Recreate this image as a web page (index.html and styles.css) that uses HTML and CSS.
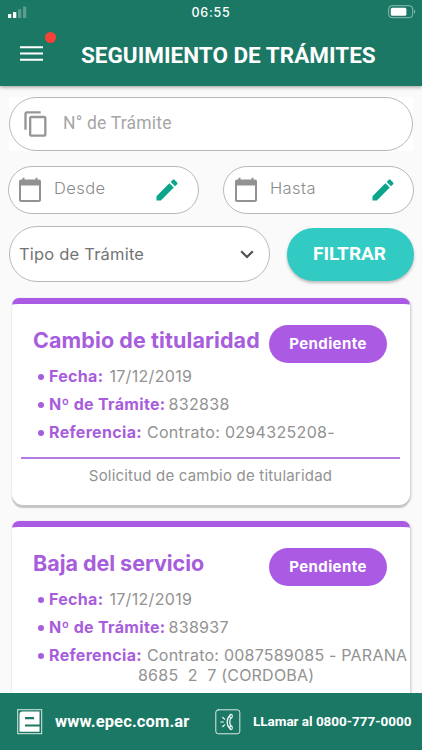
FILE: index.html
```html
<!DOCTYPE html>
<html lang="es">
<head>
<meta charset="utf-8">
<meta name="viewport" content="width=device-width, initial-scale=1">
<title>Seguimiento de trámites</title>
<link rel="stylesheet" href="styles.css">
</head>
<body>
<div class="app">
  <header class="header">
    <div class="status">
      <svg class="signal" width="20" height="12" viewBox="0 0 20 12"><g fill="#fff"><rect x="0" y="8" width="3.3" height="4" rx=".6"/><rect x="5" y="6" width="3.3" height="6" rx=".6"/><rect x="10" y="3.3" width="3.3" height="8.7" rx=".6" opacity=".28"/><rect x="15" y="0.5" width="3.3" height="11.5" rx=".6" opacity=".28"/></g></svg>
      <span class="clock">06:55</span>
      <svg class="battery" width="28" height="14" viewBox="0 0 28 14"><rect x=".7" y=".7" width="24" height="12" rx="3.3" fill="none" stroke="#fff" stroke-opacity=".5"/><rect x="2.8" y="2.8" width="15.6" height="8" rx="1.6" fill="#fff"/><path d="M26 4.6c1.6.7 1.6 3.5 0 4.2z" fill="#fff" opacity=".5"/></svg>
    </div>
    <div class="bar">
      <div class="menu">
        <svg width="23" height="15" viewBox="0 0 23 15"><path d="M0 1.3h23M0 7.5h23M0 13.7h23" stroke="#fff" stroke-width="2.1"/></svg>
        <span class="dot"></span>
      </div>
      <h1 class="title">SEGUIMIENTO DE TRÁMITES</h1>
    </div>
  </header>

  <main class="content">
    <form class="filters">
      <div class="number-wrap">
        <div class="field number">
          <svg class="copy" width="28" height="28" viewBox="0 0 24 24"><path fill="#969696" d="M16 1H4c-1.1 0-2 .9-2 2v14h2V3h12V1zm3 4H8c-1.1 0-2 .9-2 2v14c0 1.1.9 2 2 2h11c1.1 0 2-.9 2-2V7c0-1.1-.9-2-2-2zm0 16H8V7h11v14z"/></svg>
          <span class="hint">N° de Trámite</span>
        </div>
      </div>
      <div class="dates">
        <div class="field date">
          <svg class="calendar" width="24" height="26" viewBox="0 0 24 26"><path fill="#929292" d="M3 2.5h1.5V.7h2v1.8h11V.7h2v1.8H21c1.2 0 2 .8 2 2V23c0 1.200-.8 2-2 2H3c-1.200 0-2-.8-2-2V4.500c0-1.200.8-2 2-2zM3 8.500V23h18V8.500z"/></svg>
          <span class="hint">Desde</span>
          <svg class="pencil" width="28" height="28" viewBox="0 0 24 24"><path fill="#0ba58b" d="M3 17.250V21h3.750L17.810 9.940l-3.750-3.750L3 17.250zM20.710 7.040c.39-.39.39-1.020 0-1.410l-2.340-2.340c-.39-.39-1.020-.39-1.410 0l-1.830 1.830 3.750 3.750 1.830-1.830z"/></svg>
        </div>
        <div class="field date">
          <svg class="calendar" width="24" height="26" viewBox="0 0 24 26"><path fill="#929292" d="M3 2.5h1.5V.7h2v1.8h11V.7h2v1.8H21c1.2 0 2 .8 2 2V23c0 1.200-.8 2-2 2H3c-1.200 0-2-.8-2-2V4.500c0-1.200.8-2 2-2zM3 8.500V23h18V8.500z"/></svg>
          <span class="hint">Hasta</span>
          <svg class="pencil" width="28" height="28" viewBox="0 0 24 24"><path fill="#0ba58b" d="M3 17.250V21h3.750L17.810 9.940l-3.750-3.750L3 17.250zM20.710 7.040c.39-.39.39-1.020 0-1.410l-2.340-2.340c-.39-.39-1.020-.39-1.410 0l-1.830 1.830 3.750 3.750 1.830-1.830z"/></svg>
        </div>
      </div>
      <div class="actions">
        <div class="field select">
          <span class="select-label">Tipo de Trámite</span>
          <svg width="14" height="9" viewBox="0 0 14 9"><path d="M1.200 1.200L7 7l5.800-5.800" fill="none" stroke="#505050" stroke-width="2.200"/></svg>
        </div>
        <button class="filter" type="button">FILTRAR</button>
      </div>
    </form>

    <article class="card">
      <div class="card-head"><h2 class="card-title wide">Cambio de titularidad</h2><span class="badge">Pendiente</span></div>
      <ul class="facts">
        <li><b>Fecha:</b><span class="v-date">17/12/2019</span></li>
        <li><b>Nº de Trámite:</b><span class="v-num">832838</span></li>
        <li><b>Referencia:</b><span class="v-ref">Contrato: 0294325208-</span></li>
      </ul>
      <p class="note"><span>Solicitud de cambio de titularidad</span></p>
    </article>

    <article class="card">
      <div class="card-head"><h2 class="card-title">Baja del servicio</h2><span class="badge">Pendiente</span></div>
      <ul class="facts">
        <li><b>Fecha:</b><span class="v-date">17/12/2019</span></li>
        <li><b>Nº de Trámite:</b><span class="v-num">838937</span></li>
        <li><b>Referencia:</b><span class="v-ref long">Contrato: 0087589085 - PARANA</span></li>
      </ul>
      <p class="address">8685&nbsp; 2&nbsp; 7 (CORDOBA)</p>
    </article>
  </main>

  <footer class="footer">
    <svg class="logo" width="26" height="26" viewBox="0 0 26 26"><rect x=".7" y=".7" width="24" height="24" fill="none" stroke="#d9e9e5" stroke-width="1"/><path fill="#fff" fill-rule="evenodd" d="M5.500 2.500H22.500V15.500H8V17.500H22.500V22.800H2.500V5.500Q2.500 2.500 5.500 2.500zM8 8V10.300H17V8z"/></svg>
    <span class="web">www.epec.com.ar</span>
    <svg class="phone" width="26" height="26" viewBox="0 0 26 26"><g fill="none" stroke="#fff" stroke-linecap="round" stroke-linejoin="round"><rect x=".8" y=".8" width="24" height="24" rx="2.500" stroke-opacity=".85"/><path stroke-width="1.200" d="M15 6.600C11.200 9.500 11.200 16.500 15 19.400M15.900 9C14.400 11 14.400 15 15.900 17"/><ellipse cx="16" cy="7.200" rx="1.300" ry="1.900" stroke-width="1.100"/><ellipse cx="16" cy="18.800" rx="1.300" ry="1.900" stroke-width="1.100"/><path stroke-width="1.200" d="M5.800 13h2.600M7.800 8.500l1.800 1.600M7.800 17.500l1.800-1.600"/></g></svg>
    <span class="call">LLamar al 0800-777-0000</span>
  </footer>
</div>
</body>
</html>
```
FILE: styles.css
```css
* { box-sizing: border-box; }
body { margin: 0; font-family: Inter, "Liberation Sans", sans-serif; background: #fafafa; }
h1, h2, p, ul { margin: 0; padding: 0; }
svg { display: block; flex: none; }
.app { display: flex; flex-direction: column; width: 422px; height: 750px; overflow: hidden; }
span, b, h1, h2, p, button { white-space: nowrap; }

.header { flex: none; height: 86px; background: #1b7865; color: #fff; box-shadow: 0 1px 4px rgba(0, 0, 0, .4); }
.status { display: grid; grid-template-columns: 1fr auto 1fr; align-items: center; height: 24px; padding: 0 6px 0 8px; }
.clock { font-size: 12.5px; font-weight: 500; letter-spacing: .8px; margin-left: -2px; }
.battery { justify-self: end; margin-top: -1px; }
.bar { display: flex; align-items: center; height: 60px; padding-left: 20px; }
.menu { position: relative; width: 61px; margin-top: -1px; }
.dot { position: absolute; left: 25px; top: -14px; width: 11px; height: 11px; border-radius: 50%; background: #f44336; }
.title { font: 700 22.500px/28px Roboto, sans-serif; margin-top: 1px; }

.content { flex: 1; min-height: 0; overflow: hidden; padding: 11px 9px 0; }
.field { display: flex; align-items: center; border: 1px solid #b9b9b9; background: #fff; }
.number-wrap { background: #fff; }
.number { height: 54px; border-radius: 27px; padding-left: 12px; }
.hint { font-family: Roboto, sans-serif; color: #a6a6a6; font-size: 17.500px; letter-spacing: .2px; }
.number .hint { margin: -2px 0 0 13px; }
.dates { display: flex; justify-content: space-between; margin: 15px -1px 0; }
.date { width: 191px; height: 48px; border-radius: 24px; padding: 0 17px 0 9px; }
.date:last-child { padding: 0 16px 0 10px; }
.date .hint { font: 300 16.500px Inter, sans-serif; color: #8c8c8c; margin: -5px 0 0 12px; letter-spacing: .4px; }
.pencil { margin-left: auto; }
.actions { display: flex; justify-content: space-between; align-items: center; margin-top: 12px; }
.select { width: 261px; height: 56px; border-radius: 28px; padding: 0 15px 0 9px; justify-content: space-between; }
.select-label { font-size: 16.500px; color: #747474; letter-spacing: .2px; }
.filter { width: 127px; height: 53px; border: 0; border-radius: 27px; padding: 0 2px 1px 0; margin-right: -1px; background: #31cbc4; color: #fff; font: 700 19px Roboto, sans-serif; box-shadow: 0 2px 3px rgba(0, 0, 0, .25); }

.card { height: 206.500px; margin: 16px 3px 0; border-top: 6px solid #aa5ae3; border-radius: 7px 7px 11px 11px; background: #fff; box-shadow: 0 3px 1px #c5c7c6, 1px 1px 3px rgba(0, 0, 0, .2); }
.card:last-child { height: 260px; }
.card-head { display: flex; justify-content: space-between; height: 58px; padding: 21px 23px 0 21px; }
.card-title { font-size: 21.500px; line-height: 31px; font-weight: 700; color: #a75ddc; letter-spacing: -.03px; }
.card-title.wide { letter-spacing: .1px; }
.badge { flex: none; width: 118px; height: 38px; border-radius: 19px; background: #aa5ae3; color: #fff; text-align: center; font-size: 15px; line-height: 38px; font-weight: 700; letter-spacing: .4px; }
.facts { list-style: none; padding-left: 26px; font-size: 16px; }
.facts li { display: flex; height: 28px; line-height: 28px; color: #929292; letter-spacing: .32px; }
.facts li::before { content: ""; width: 6px; height: 6px; border-radius: 50%; background: #a75ddc; margin: 12px 5px 0 0; flex: none; }
.facts b { font-weight: 700; color: #a75ddc; letter-spacing: .32px; }
.v-date { margin-left: 6px; }
.v-num { margin-left: 3px; }
.v-ref { margin-left: 5px; }
.v-ref.long { letter-spacing: .22px; }
.note { margin: 11px 10px 0 9px; border-top: 2px solid #b47be0; padding-top: 6px; text-align: center; font-size: 15px; line-height: 22px; color: #929292; letter-spacing: .2px; }
.address { padding-left: 126px; margin-top: -5px; font-size: 16px; line-height: 22px; color: #929292; letter-spacing: .22px; }

.footer { flex: none; height: 57px; display: flex; align-items: center; padding-left: 17px; background: #1b7865; color: #fff; }
.web { width: 160px; margin: -1px 0 0 12px; font: 700 16.500px Roboto, sans-serif; letter-spacing: .13px; }
.call { margin: -1px 0 0 12px; font: 700 13.500px Roboto, sans-serif; letter-spacing: -.03px; }
```
